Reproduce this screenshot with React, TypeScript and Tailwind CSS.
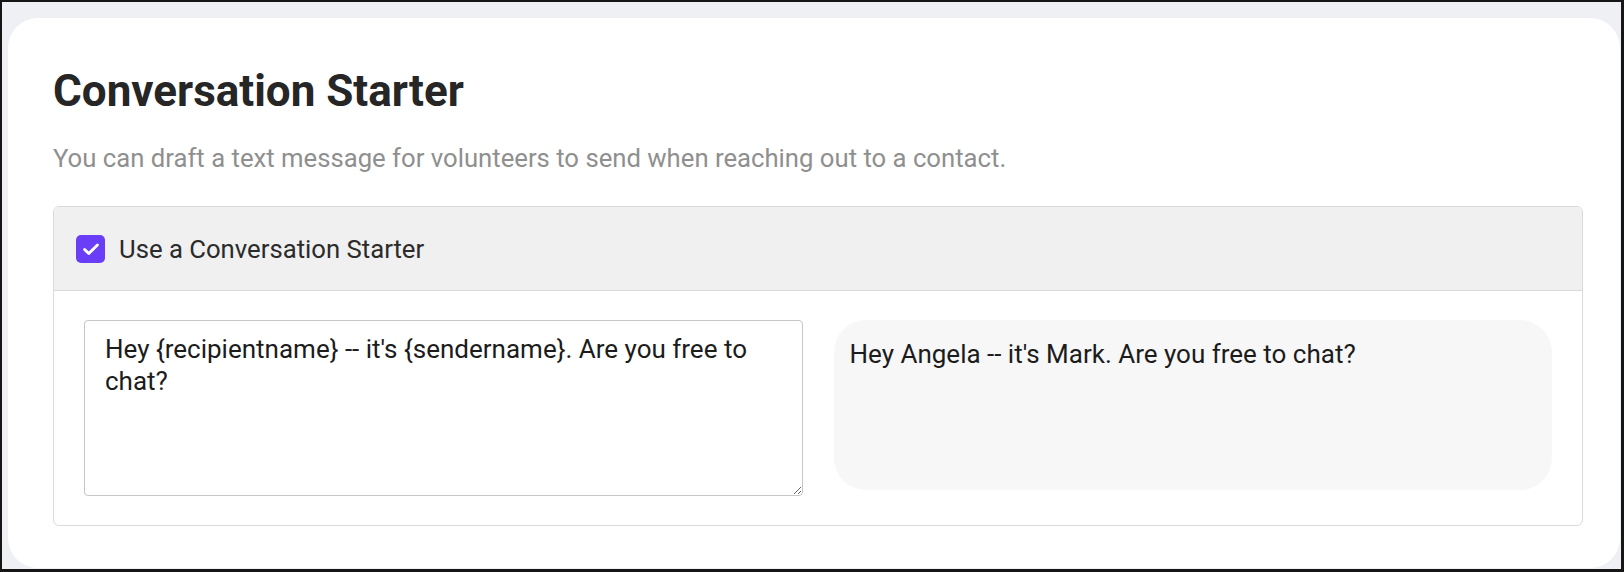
import { useState } from "react";

const FONT = "font-['Roboto','Liberation_Sans',sans-serif]";

function CheckBox({ checked, onToggle }: { checked: boolean; onToggle: () => void }) {
  return (
    <button
      type="button"
      onClick={onToggle}
      className={`w-[29px] h-[28px] rounded-[5px] flex items-center justify-center shrink-0 ${
        checked ? "bg-[#6a3ef6]" : "bg-white border border-[#bdbdbd]"
      }`}
    >
      {checked && (
        <svg width="22" height="22" viewBox="0 0 24 24" fill="none">
          <path d="M5 12.5l4.6 4.4L19 7.6" stroke="white" strokeWidth="3.2" strokeLinecap="round" strokeLinejoin="round" />
        </svg>
      )}
    </button>
  );
}

export default function App() {
  const [enabled, setEnabled] = useState(true);
  const [draft, setDraft] = useState("Hey {recipientname} -- it's {sendername}. Are you free to chat?");

  // preview swaps the placeholders for sample names
  const preview = draft.replace(/\{recipientname\}/g, "Angela").replace(/\{sendername\}/g, "Mark");

  return (
    <div className={`w-[1624px] h-[572px] overflow-hidden bg-[#eff0f4] border-t-2 border-l-2 border-r-[3px] border-b-[3px] border-[#161616] ${FONT}`}>
      <div className="ml-[6px] mt-4 w-[1612px] h-[550px] rounded-[30px] bg-white pt-[47px] pl-[45px] pr-[37px]">
        <h1 className="text-[44px] leading-[52px] font-bold text-[#262626]">Conversation Starter</h1>
        <p className="mt-[25px] text-[25.7px] leading-[32px] text-[#8f8f8f]">
          You can draft a text message for volunteers to send when reaching out to a contact.
        </p>

        <div className="mt-[32px] border border-[#dadada] rounded-[6px] overflow-hidden">
          {/* Header row */}
          <div className="h-[84px] bg-[#f0f0f0] border-b border-[#dadada] flex items-center pl-[22px] gap-[14px]">
            <CheckBox checked={enabled} onToggle={() => setEnabled(!enabled)} />
            <span className="text-[25.7px] leading-[32px] text-[#2b2b2b]">Use a Conversation Starter</span>
          </div>

          {/* Editor + preview */}
          {enabled && (
            <div className="grid grid-cols-2 gap-[31px] items-start pt-[29px] pb-[29px] px-[30px]">
              <textarea
                value={draft}
                onChange={(e) => setDraft(e.target.value)}
                className={`h-[176px] w-full border border-[#c6c6c6] rounded-[4px] pt-[12px] px-[20px] text-[26px] leading-[32px] text-[#1c1c1c] outline-none ${FONT}`}
              />
              <div className="h-[170px] rounded-[32px] bg-[#f7f7f7] pt-[18px] pl-[16px] pr-[20px] text-[26px] leading-[32px] text-[#1c1c1c]">
                {preview}
              </div>
            </div>
          )}
        </div>
      </div>
    </div>
  );
}
